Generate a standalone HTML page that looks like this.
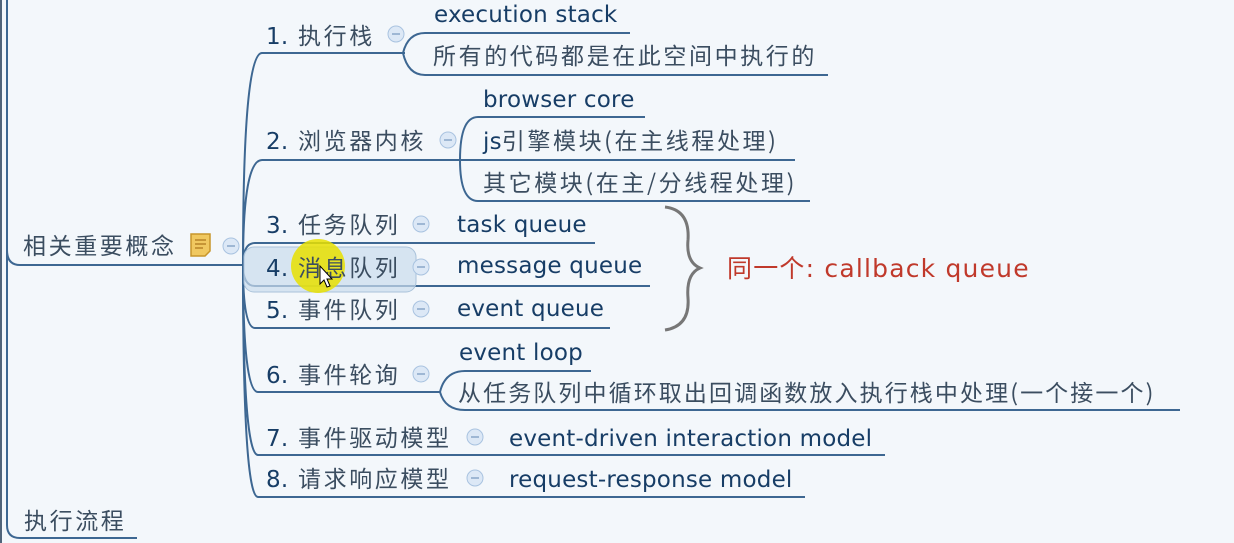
<!DOCTYPE html>
<html><head><meta charset="utf-8"><style>
html,body{margin:0;padding:0;background:#f3f7fb;}
svg{display:block}
.c{font-family:"Noto Sans CJK SC","DejaVu Sans",sans-serif;font-size:23px;letter-spacing:2.6px;fill:#3b4d60;}
.e{font-family:"DejaVu Sans","Noto Sans CJK SC",sans-serif;font-size:23px;letter-spacing:0.2px;fill:#173d66;}
.z{font-family:"Noto Sans CJK SC","DejaVu Sans",sans-serif;font-size:23px;letter-spacing:2.6px;fill:#3b4d60;}
</style></head><body>
<svg width="1234" height="543" viewBox="0 0 1234 543" xmlns="http://www.w3.org/2000/svg">
<rect width="1234" height="543" fill="#f3f7fb"/>
<line x1="1" y1="0" x2="1" y2="543" stroke="#50647a" stroke-width="2"/>
<g fill="none" stroke="#3d6792" stroke-width="2">
<path d="M7 0 V250 Q7 265 20 265 H243"/>
<path d="M7 240 V525 Q7 538 20 538 H137"/>
<path d="M243 265 Q243 53 262 53 H405"/>
<path d="M243 265 Q243 160 262 160 H795"/>
<path d="M243 265 Q243 243 255 243 H595"/>
<path d="M243 265 Q243 286 255 286 H650"/>
<path d="M243 265 Q243 328 255 328 H610"/>
<path d="M243 265 Q243 392 258 392 H440"/>
<path d="M243 265 Q243 455 258 455 H885"/>
<path d="M243 265 Q243 497 258 497 H805"/>
<path d="M403 53 Q408 33 425 33 H630"/>
<path d="M403 53 Q408 75 425 75 H828"/>
<path d="M460 160 Q460 117 478 117 H645"/>
<path d="M460 160 Q460 201 478 201 H810"/>
<path d="M440 392 Q445 371 465 371 H591"/>
<path d="M440 392 Q445 410 465 410 H1180"/>
</g>
<rect x="244" y="247" width="172" height="45" rx="10" fill="#c9dcec" fill-opacity="0.7" stroke="#a9c2da"/>
<circle cx="318" cy="266" r="27" fill="#e8e000" fill-opacity="0.85"/>
<path d="M665 207 Q690 210 688 240 Q686 262 700 268 Q686 274 688 298 Q690 326 665 330" fill="none" stroke="#777" stroke-width="3"/>
<g fill="#dce8f6" stroke="#a9c3e0" stroke-width="1">
<circle cx="396" cy="34" r="8"/><circle cx="448" cy="140" r="8"/><circle cx="421" cy="224" r="8"/><circle cx="421" cy="267" r="8"/><circle cx="421" cy="309" r="8"/><circle cx="421" cy="374" r="8"/><circle cx="475" cy="437" r="8"/><circle cx="475" cy="478" r="8"/><circle cx="231" cy="246" r="8"/>
</g>
<g stroke="#8aa7c8" stroke-width="1.5">
<line x1="392" y1="34" x2="400" y2="34"/><line x1="444" y1="140" x2="452" y2="140"/><line x1="417" y1="224" x2="425" y2="224"/><line x1="417" y1="267" x2="425" y2="267"/><line x1="417" y1="309" x2="425" y2="309"/><line x1="417" y1="374" x2="425" y2="374"/><line x1="471" y1="437" x2="479" y2="437"/><line x1="471" y1="478" x2="479" y2="478"/><line x1="227" y1="246" x2="235" y2="246"/>
</g>
<path d="M191 234 H210 V251 L205 256 H191 Z" fill="#f0c860" stroke="#c8962a" stroke-width="1.5"/>
<g stroke="#b07a20" stroke-width="1.3"><line x1="195" y1="240" x2="206" y2="240"/><line x1="195" y1="244" x2="206" y2="244"/><line x1="195" y1="248" x2="203" y2="248"/></g>
<text class="z" x="23" y="254">相关重要概念</text>
<text class="z" x="24" y="529">执行流程</text>
<text class="c" x="266" y="44"><tspan class="e">1. </tspan><tspan x="298">执行栈</tspan></text>
<text class="c" x="266" y="149"><tspan class="e">2. </tspan><tspan x="298">浏览器内核</tspan></text>
<text class="c" x="266" y="233"><tspan class="e">3. </tspan><tspan x="298">任务队列</tspan></text>
<text class="c" x="266" y="276"><tspan class="e">4. </tspan><tspan x="298">消息队列</tspan></text>
<text class="c" x="266" y="318"><tspan class="e">5. </tspan><tspan x="298">事件队列</tspan></text>
<text class="c" x="266" y="383"><tspan class="e">6. </tspan><tspan x="298">事件轮询</tspan></text>
<text class="c" x="266" y="446"><tspan class="e">7. </tspan><tspan x="298">事件驱动模型</tspan></text>
<text class="c" x="266" y="487"><tspan class="e">8. </tspan><tspan x="298">请求响应模型</tspan></text>
<text class="e" x="434" y="22">execution stack</text>
<text class="z" x="433" y="64">所有的代码都是在此空间中执行的</text>
<text class="e" x="483" y="107">browser core</text>
<text class="c" x="483" y="149"><tspan class="e">js</tspan>引擎模块(在主线程处理)</text>
<text class="z" x="483" y="191">其它模块(在主/分线程处理)</text>
<text class="e" x="457" y="232">task queue</text>
<text class="e" x="457" y="273">message queue</text>
<text class="e" x="457" y="316">event queue</text>
<text class="e" x="459" y="360">event loop</text>
<text class="z" x="458" y="401" style="letter-spacing:2.1px">从任务队列中循环取出回调函数放入执行栈中处理(一个接一个)</text>
<text class="e" x="509" y="446">event-driven interaction model</text>
<text class="e" x="509" y="487">request-response model</text>
<text x="727" y="277" style="font-family:'DejaVu Sans','Noto Sans CJK SC',sans-serif;font-size:25px;letter-spacing:1.2px;fill:#c0392b">同一个: callback queue</text>
<path d="M320 266 V284 L324 280 L327 287 L330 286 L327 279 L332 279 Z" fill="#fff" stroke="#000" stroke-width="1"/>
</svg>
</body></html>
